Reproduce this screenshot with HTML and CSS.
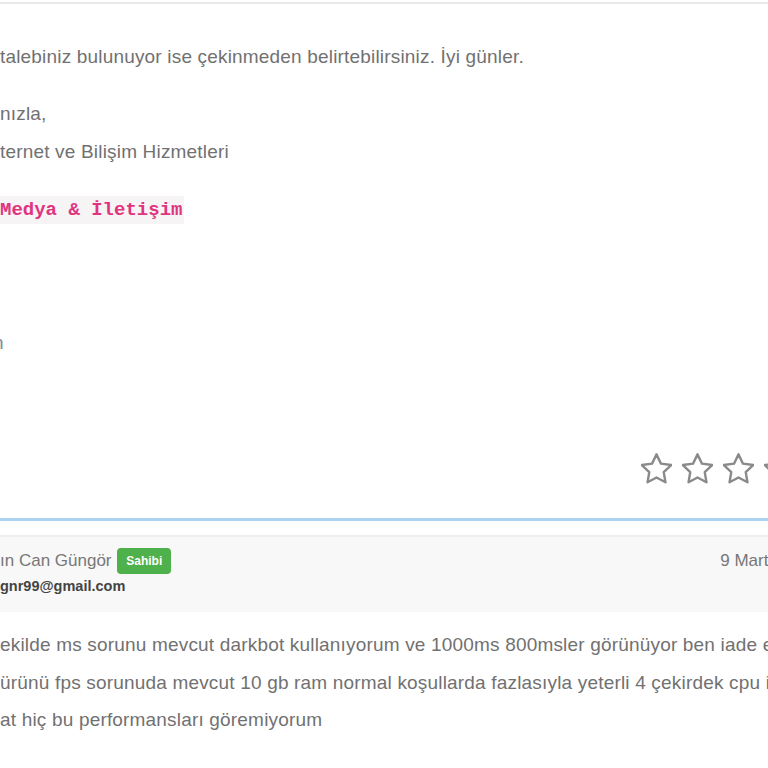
FILE: index.html
```html
<!DOCTYPE html>
<html lang="tr">
<head>
  <meta charset="UTF-8">
  <title>Destek Talebi</title>
  <link rel="stylesheet" href="styles.css">
</head>
<body>
  <div class="reply staff">
    <div class="message">
      <p>talebiniz bulunuyor ise çekinmeden belirtebilirsiniz. İyi günler.</p>
      <p>nızla,<br>ternet ve Bilişim Hizmetleri</p>
      <p><code>Medya &amp; İletişim</code></p>
      <p>&nbsp;<br>&nbsp;<br><span class="cut">n</span></p>
    </div>
    <div class="rating">
      <svg viewBox="3 2.4 18 18"><path d="M12 3.2l2.6 5.4 5.9.8-4.3 4.1 1 5.9L12 16.6l-5.2 2.8 1-5.9-4.3-4.1 5.9-.8z"/></svg>
      <svg viewBox="3 2.4 18 18"><path d="M12 3.2l2.6 5.4 5.9.8-4.3 4.1 1 5.9L12 16.6l-5.2 2.8 1-5.9-4.3-4.1 5.9-.8z"/></svg>
      <svg viewBox="3 2.4 18 18"><path d="M12 3.2l2.6 5.4 5.9.8-4.3 4.1 1 5.9L12 16.6l-5.2 2.8 1-5.9-4.3-4.1 5.9-.8z"/></svg>
      <svg viewBox="3 2.4 18 18"><path d="M12 3.2l2.6 5.4 5.9.8-4.3 4.1 1 5.9L12 16.6l-5.2 2.8 1-5.9-4.3-4.1 5.9-.8z"/></svg>
    </div>
  </div>

  <div class="reply">
    <div class="reply-header">
      <div class="user">
        <div class="name">ın Can Güngör <span class="badge">Sahibi</span></div>
        <div class="email">gnr99@gmail.com</div>
      </div>
      <div class="date">9 Mart 2021</div>
    </div>
    <div class="message">
      <p>ekilde ms sorunu mevcut darkbot kullanıyorum ve 1000ms 800msler görünüyor ben iade etmek istiyorum<br>
      ürünü fps sorunuda mevcut 10 gb ram normal koşullarda fazlasıyla yeterli 4 çekirdek cpu ile<br>
      at hiç bu performansları göremiyorum</p>
    </div>
  </div>
</body>
</html>
```

FILE: styles.css
```css
html, body {
  overflow: hidden;
}

body {
  margin: 0;
  width: 768px;
  height: 768px;
  font-family: "Liberation Sans", Arial, sans-serif;
  font-size: 19px;
  color: #717171;
  background: #fff;
}

.reply {
  white-space: nowrap;
}

.reply.staff {
  border-top: 2px solid #e9e9e9;
  border-bottom: 3px solid #a9d3f1;
  margin-top: 2px;
}

.message {
  padding-top: 34px;
}

.message p {
  margin: 0 0 19px;
  line-height: 38px;
  letter-spacing: 0.18px;
}

.message p:last-child {
  margin-bottom: 0;
}

code {
  font-family: "Liberation Mono", monospace;
  font-size: 19px;
  font-weight: bold;
  letter-spacing: 0;
  color: #e0347f;
  background: #f6f4f5;
  padding: 3px 2px 3px 0;
}

.cut {
  display: inline-block;
  margin-left: -7px;
  color: #7d8b99;
}

.rating {
  display: flex;
  gap: 10px;
  justify-content: flex-end;
  margin: 91px -27px 0 0;
  padding-bottom: 34px;
}

.rating svg {
  width: 31px;
  height: 31px;
  fill: none;
  stroke: #8a8a8a;
  stroke-width: 1.4;
  stroke-linejoin: round;
}

.reply + .reply {
  margin-top: 14px;
}

.reply-header {
  display: flex;
  justify-content: space-between;
  border-top: 2px solid #eeeeee;
  background: #f8f8f8;
  padding: 11px 0 11px;
  height: 53px;
}

.name {
  font-size: 17px;
  color: #777;
  line-height: 26px;
}

.badge {
  display: inline-block;
  background: #4fb14c;
  color: #fff;
  font-size: 12px;
  font-weight: bold;
  line-height: 26px;
  padding: 0 9px;
  border-radius: 4px;
  margin-left: 1px;
  vertical-align: top;
}

.email {
  font-size: 14.5px;
  font-weight: bold;
  color: #444;
  margin-top: 4px;
}

.date {
  font-size: 17px;
  color: #777;
  line-height: 26px;
  margin-right: -43px;
}

.reply-header + .message {
  padding-top: 14px;
}

.reply-header + .message p {
  line-height: 37.5px;
}
```
